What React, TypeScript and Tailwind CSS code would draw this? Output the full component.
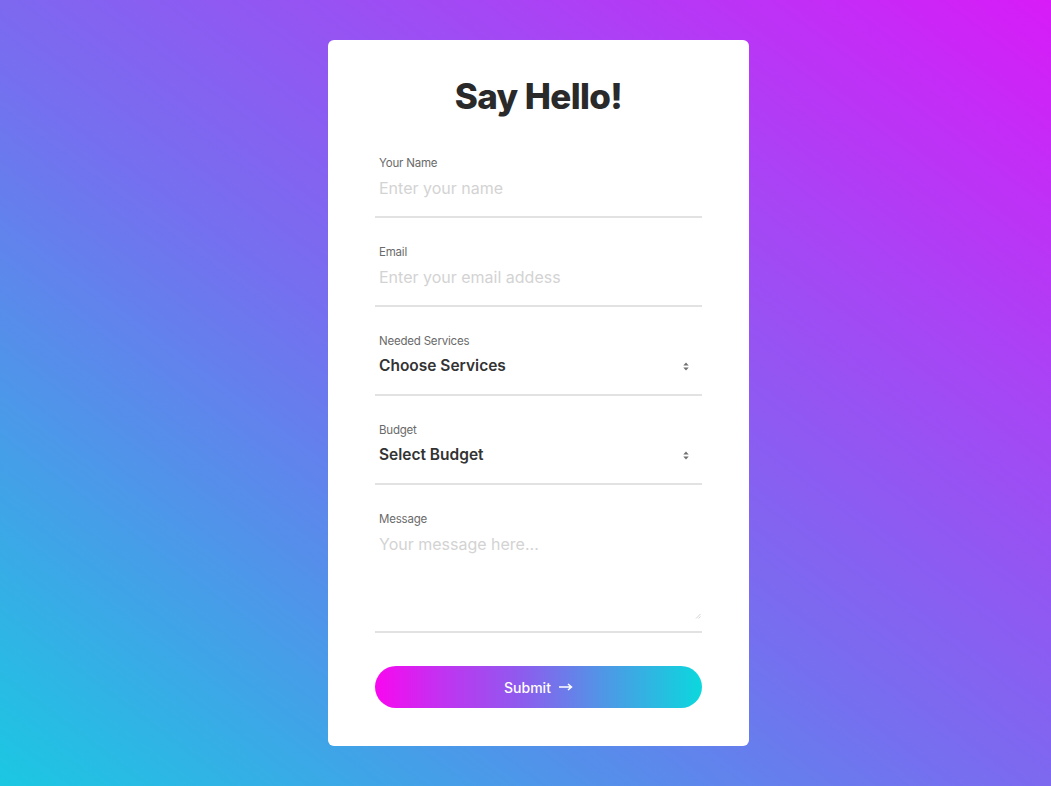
import React from "react";

function Chevrons() {
  return (
    <svg width="8" height="11" viewBox="0 0 8 11" className="shrink-0">
      <path d="M1.3 4.5 L4 1.5 L6.7 4.5 Z" fill="#707070" />
      <path d="M1.3 6.5 L4 9.5 L6.7 6.5 Z" fill="#707070" />
    </svg>
  );
}

function Field({ label, children, tall }: { label: string; children: React.ReactNode; tall?: boolean }) {
  return (
    <div className={`flex flex-col border-b-2 border-[#e2e2e2] ${tall ? "h-[130px]" : "h-[71px]"}`}>
      <div className="px-1 pt-[9px] text-[11.5px] leading-[14px] text-[#6a6a6a] tracking-[-0.2px]">{label}</div>
      {children}
    </div>
  );
}

export default function App() {
  return (
    <div
      className="w-[1051px] h-[786px] flex justify-center pt-[40px] bg-[linear-gradient(to_top_right,#1bc8e2_0%,#7470ef_45%,#a04bf4_70%,#d81bf8_100%)]"
      style={{ fontFamily: "Inter, 'Noto Sans', sans-serif" }}
    >
      <div className="w-[421px] h-[706px] bg-white rounded-[6px] flex flex-col px-[47px] ml-[26px]">
        <h1 className="text-center text-[35px] leading-[40px] font-extrabold text-[#2a2a2a] tracking-[-0.6px] mt-[36px]">
          Say Hello!
        </h1>
        <div className="mt-[31px] flex flex-col gap-[18px]">
          <Field label="Your Name">
            <div className="px-1 mt-[9px] text-[16px] leading-[18px] text-[#d3d3d3]">Enter your name</div>
          </Field>
          <Field label="Email">
            <div className="px-1 mt-[9px] text-[16px] leading-[18px] text-[#d3d3d3]">Enter your email addess</div>
          </Field>
          <Field label="Needed Services">
            <div className="px-1 mt-[9px] flex items-center justify-between pr-[12px]">
              <span className="text-[15.5px] leading-[18px] font-semibold text-[#333]">Choose Services</span>
              <Chevrons />
            </div>
          </Field>
          <Field label="Budget">
            <div className="px-1 mt-[9px] flex items-center justify-between pr-[12px]">
              <span className="text-[15.5px] leading-[18px] font-semibold text-[#333]">Select Budget</span>
              <Chevrons />
            </div>
          </Field>
          <Field label="Message" tall>
            <div className="px-1 mt-[9px] text-[16px] leading-[18px] text-[#d3d3d3]">Your message here...</div>
            <div className="flex-1 flex items-end justify-end pb-[12px] pr-[1px]">
              <svg width="6" height="6" viewBox="0 0 6 6">
                <path d="M5.5 1 L1 5.5 M5.5 3.5 L3.5 5.5" stroke="#c8c8c8" strokeWidth="0.8" />
              </svg>
            </div>
          </Field>
        </div>
        <button className="mt-[33px] h-[42px] w-full rounded-full bg-[linear-gradient(to_right,#f907ef_0%,#c232f1_20%,#8d5cee_45%,#4f97e6_70%,#0bd8dd_100%)] flex items-center justify-center gap-[8px] text-white text-[14px] font-medium">
          <span>Submit</span>
          <svg width="14" height="8" viewBox="0 0 14 8">
            <path d="M0 4 H12 M9 1 L12.5 4 L9 7" stroke="white" strokeWidth="1.5" fill="none" />
          </svg>
        </button>
      </div>
    </div>
  );
}
